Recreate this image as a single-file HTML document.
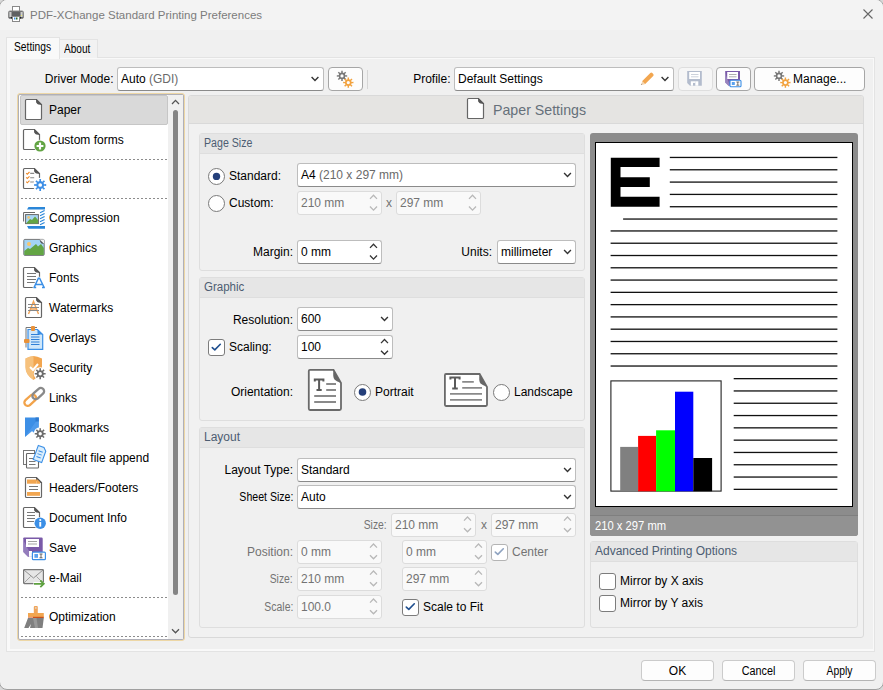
<!DOCTYPE html>
<html><head><meta charset="utf-8">
<style>
*{box-sizing:border-box}
html,body{margin:0;padding:0;width:883px;height:690px;overflow:hidden;background:#d8d8d8}
body{font-family:"Liberation Sans",sans-serif;font-size:12px;color:#000;position:relative}
.a{position:absolute}
.t{position:absolute;white-space:nowrap;line-height:14px}
.win{left:-1px;top:-1px;width:885px;height:691px;background:#f0f0f0;border:1px solid #a0a0a0;border-radius:8px;overflow:hidden}
.cb{position:absolute;background:#fff;border:1px solid #bdbdbd;border-bottom-color:#8a8a8a;border-radius:3px}
.btn{position:absolute;background:#fdfdfd;border:1px solid #cfcfcf;border-bottom-color:#b0b0b0;border-radius:4px}
.sp{position:absolute;background:#fff;border:1px solid #bdbdbd;border-bottom-color:#8a8a8a;border-radius:3px}
.sp.dis{background:#f9f9f9;border-color:#dcdcdc}
.grp{position:absolute;border:1px solid #dedede;border-radius:3px;background:#f0f0f0}
.gh{position:absolute;left:0;top:0;right:0;height:20px;background:#e6e6e6;border-bottom:1px solid #dedede}
.ght{position:absolute;left:4px;top:1.5px;color:#4d5d72;white-space:nowrap;line-height:14px;font-size:12px;transform-origin:0 0}
.chk{position:absolute;width:17px;height:17px;background:#fff;border:1.2px solid #7c7c7c;border-radius:3px}
.rad{position:absolute;width:17px;height:17px;background:#fff;border:1.2px solid #7a7a7a;border-radius:50%}
.dis{color:#737373}
.li{position:absolute;left:49px;white-space:nowrap;line-height:14px}
.dash{position:absolute;left:21px;width:146px;height:1px;background-image:linear-gradient(to right,#8c8c8c 50%,transparent 50%);background-size:4px 1px}
svg{position:absolute;overflow:visible}
</style></head><body>
<div class="a win">
  <!-- title bar -->
  <div class="a" style="left:0;top:0;width:883px;height:30px;background:#f3f3f3"></div>
  <div class="t" style="left:30px;top:8px;font-size:11.5px;color:#7c7c7c">PDF-XChange Standard Printing Preferences</div>

  <!-- tabs -->
  <div class="a" style="left:6px;top:57px;width:869px;height:595px;background:#f9f9f9;border:1px solid #e3e3e3"></div>
  <div class="a" style="left:10px;top:59px;width:863px;height:590px;background:#f0f0f0"></div>
  <div class="a" style="left:59px;top:39px;width:39px;height:19px;background:#f2f2f2;border:1px solid #e3e3e3;border-bottom:none"></div>
  <div class="a" style="left:6px;top:37px;width:54px;height:22px;background:#f9f9f9;border:1px solid #e3e3e3;border-bottom:none"></div>
  <div class="t" style="left:14px;top:40px;transform:scaleX(0.855);transform-origin:0 0">Settings</div>
  <div class="t" style="left:64px;top:41.5px;transform:scaleX(0.84);transform-origin:0 0">About</div>

  <!-- driver mode row -->
  <div class="t" style="right:769.5px;top:72px">Driver Mode:</div>
  <div class="cb" style="left:117px;top:67px;width:207px;height:24px"></div>
  <div class="t" style="left:121px;top:72px">Auto <span style="color:#6a6a6a">(GDI)</span></div>
  <div class="btn" style="left:328px;top:67px;width:35px;height:24px;border-color:#a6a6a6"></div>
  <div class="a" style="left:367px;top:70px;width:1px;height:19px;background:#d6d6d6"></div>

  <div class="t" style="right:432.5px;top:72px">Profile:</div>
  <div class="cb" style="left:454px;top:67px;width:220px;height:24px"></div>
  <div class="t" style="left:458px;top:72px">Default Settings</div>
  <div class="btn" style="left:678px;top:67px;width:35px;height:24px;background:#f6f6f6;border-color:#dedede"></div>
  <div class="btn" style="left:716px;top:67px;width:35px;height:24px;border-color:#a6a6a6"></div>
  <div class="btn" style="left:754px;top:67px;width:111px;height:24px;border-color:#a6a6a6"></div>
  <div class="t" style="left:793px;top:72px">Manage...</div>

  <!-- left list -->
  <div class="a" style="left:17px;top:93px;width:168px;height:548px;border:1px solid #edd7a6;border-radius:3px;background:#edd7a6"></div>
  <div class="a" style="left:18px;top:94px;width:166px;height:546px;border:1px solid #b0b0b8;border-radius:2px;background:#fff"></div>
  <div class="a" style="left:168px;top:95px;width:15px;height:544px;background:#f0f0f0"></div>
  <div class="a" style="left:173px;top:110px;width:5px;height:485px;background:#858585;border-radius:2.5px"></div>

  <div class="a" style="left:20px;top:95px;width:148px;height:30px;background:#d9d9d9;border:1px solid #c6c6c6;border-radius:2px"></div>
  <div class="li" style="top:103px">Paper</div>
  <div class="li" style="top:133px">Custom forms</div>
  <div class="dash" style="top:159px"></div>
  <div class="li" style="top:172px">General</div>
  <div class="dash" style="top:198px"></div>
  <div class="li" style="top:211px">Compression</div>
  <div class="li" style="top:241px">Graphics</div>
  <div class="li" style="top:271px">Fonts</div>
  <div class="li" style="top:301px">Watermarks</div>
  <div class="li" style="top:331px">Overlays</div>
  <div class="li" style="top:361px">Security</div>
  <div class="li" style="top:391px">Links</div>
  <div class="li" style="top:421px">Bookmarks</div>
  <div class="li" style="top:451px">Default file append</div>
  <div class="li" style="top:481px">Headers/Footers</div>
  <div class="li" style="top:511px">Document Info</div>
  <div class="li" style="top:541px">Save</div>
  <div class="li" style="top:571px">e-Mail</div>
  <div class="dash" style="top:597px"></div>
  <div class="li" style="top:610px">Optimization</div>
  <div class="dash" style="top:636px"></div>

  <!-- right panel -->
  <div class="a" style="left:188px;top:95px;width:676px;height:543px;background:#f1f1f1;border:1px solid #d9d9d9;border-radius:3px"></div>
  <div class="a" style="left:189px;top:96px;width:674px;height:28px;background:#e5e4e2;border-bottom:1px solid #d9d9d9;border-radius:2px 2px 0 0"></div>
  <div class="t" style="left:493px;top:101px;font-size:14.2px;line-height:18px;color:#66707a">Paper Settings</div>

  <!-- Page Size group -->
  <div class="grp" style="left:199px;top:133px;width:386px;height:138px"><div class="gh"></div><div class="ght" style="transform:scaleX(0.885)">Page Size</div></div>
  <div class="rad" style="left:208px;top:168px"></div>
  <div class="t" style="left:229px;top:169px">Standard:</div>
  <div class="cb" style="left:297px;top:163px;width:279px;height:24px"></div>
  <div class="t" style="left:301px;top:168px">A4 <span style="color:#6a6a6a">(210 x 297 mm)</span></div>
  <div class="rad" style="left:208px;top:195px"></div>
  <div class="t" style="left:229px;top:196px">Custom:</div>
  <div class="sp dis" style="left:297px;top:191px;width:85px;height:24px"></div>
  <div class="t dis" style="left:301px;top:196px">210 mm</div>
  <div class="t dis" style="left:386px;top:196px">x</div>
  <div class="sp dis" style="left:396px;top:191px;width:85px;height:24px"></div>
  <div class="t dis" style="left:400px;top:196px">297 mm</div>
  <div class="t" style="right:590px;top:245px">Margin:</div>
  <div class="sp" style="left:297px;top:240px;width:85px;height:24px"></div>
  <div class="t" style="left:301px;top:245px">0 mm</div>
  <div class="t" style="right:391px;top:245px">Units:</div>
  <div class="cb" style="left:497px;top:240px;width:79px;height:24px"></div>
  <div class="t" style="left:501px;top:245px">millimeter</div>

  <!-- Graphic group -->
  <div class="grp" style="left:199px;top:277px;width:386px;height:144px"><div class="gh"></div><div class="ght" style="transform:scaleX(0.96)">Graphic</div></div>
  <div class="t" style="right:590px;top:313px">Resolution:</div>
  <div class="cb" style="left:297px;top:307px;width:96px;height:24px"></div>
  <div class="t" style="left:301px;top:312px">600</div>
  <div class="chk" style="left:208px;top:339px"></div>
  <div class="t" style="left:229px;top:340px">Scaling:</div>
  <div class="sp" style="left:297px;top:335px;width:96px;height:24px"></div>
  <div class="t" style="left:301px;top:340px">100</div>
  <div class="t" style="right:590px;top:385px">Orientation:</div>
  <div class="rad" style="left:354px;top:384px"></div>
  <div class="t" style="left:375px;top:385px">Portrait</div>
  <div class="rad" style="left:493px;top:384px"></div>
  <div class="t" style="left:514px;top:385px">Landscape</div>

  <!-- Layout group -->
  <div class="grp" style="left:199px;top:427px;width:386px;height:201px"><div class="gh"></div><div class="ght">Layout</div></div>
  <div class="t" style="right:590px;top:463px">Layout Type:</div>
  <div class="cb" style="left:297px;top:458px;width:279px;height:24px"></div>
  <div class="t" style="left:301px;top:463px">Standard</div>
  <div class="t" style="right:590px;top:490px;transform:scaleX(0.88);transform-origin:100% 0">Sheet Size:</div>
  <div class="cb" style="left:297px;top:485px;width:279px;height:24px"></div>
  <div class="t" style="left:301px;top:490px">Auto</div>
  <div class="t dis" style="right:496px;top:518px;transform:scaleX(0.86);transform-origin:100% 0">Size:</div>
  <div class="sp dis" style="left:391px;top:513px;width:85px;height:24px"></div>
  <div class="t dis" style="left:395px;top:518px">210 mm</div>
  <div class="t dis" style="left:481px;top:518px">x</div>
  <div class="sp dis" style="left:491px;top:513px;width:85px;height:24px"></div>
  <div class="t dis" style="left:495px;top:518px">297 mm</div>
  <div class="t dis" style="right:590px;top:545px">Position:</div>
  <div class="sp dis" style="left:297px;top:540px;width:85px;height:24px"></div>
  <div class="t dis" style="left:301px;top:545px">0 mm</div>
  <div class="sp dis" style="left:402px;top:540px;width:85px;height:24px"></div>
  <div class="t dis" style="left:406px;top:545px">0 mm</div>
  <div class="chk" style="left:491px;top:543.5px;border-color:#b4b4b4"></div>
  <div class="t dis" style="left:512px;top:545px">Center</div>
  <div class="t dis" style="right:590px;top:572px;transform:scaleX(0.86);transform-origin:100% 0">Size:</div>
  <div class="sp dis" style="left:297px;top:567px;width:85px;height:24px"></div>
  <div class="t dis" style="left:301px;top:572px">210 mm</div>
  <div class="sp dis" style="left:402px;top:567px;width:85px;height:24px"></div>
  <div class="t dis" style="left:406px;top:572px">297 mm</div>
  <div class="t dis" style="right:590px;top:600px;transform:scaleX(0.87);transform-origin:100% 0">Scale:</div>
  <div class="sp dis" style="left:297px;top:595px;width:85px;height:24px"></div>
  <div class="t dis" style="left:301px;top:600px">100.0</div>
  <div class="chk" style="left:402px;top:599px"></div>
  <div class="t" style="left:423px;top:600px">Scale to Fit</div>

  <!-- preview -->
  <div class="a" style="left:590px;top:133px;width:268px;height:403px;background:#8c8c8c;border-radius:3px"></div>
  <div class="a" style="left:595px;top:142px;width:258px;height:365px;background:#fff;border:1px solid #000"></div>
  <div class="a" style="left:590px;top:515px;width:268px;height:21px;background:#929292;border-top:1px solid #7f7f7f;border-radius:0 0 3px 3px"></div>
  <div class="t" style="left:595px;top:519px;color:#fff;transform:scaleX(0.935);transform-origin:0 0">210 x 297 mm</div>

  <!-- advanced -->
  <div class="grp" style="left:590px;top:541px;width:268px;height:87px"><div class="gh"></div><div class="ght">Advanced Printing Options</div></div>
  <div class="chk" style="left:599px;top:573px"></div>
  <div class="t" style="left:620px;top:574px">Mirror by X axis</div>
  <div class="chk" style="left:599px;top:595px"></div>
  <div class="t" style="left:620px;top:596px">Mirror by Y axis</div>

  <!-- bottom buttons -->
  <div class="btn" style="left:641px;top:660px;width:73px;height:21px;border-color:#cbcbcb;border-bottom-color:#b4b4b4"><div class="t" style="left:0;right:0;top:3px;text-align:center">OK</div></div>
  <div class="btn" style="left:722px;top:660px;width:73px;height:21px;border-color:#cbcbcb;border-bottom-color:#b4b4b4"><div class="t" style="left:0;right:0;top:3px;text-align:center;transform:scaleX(0.9)">Cancel</div></div>
  <div class="btn" style="left:803px;top:660px;width:73px;height:21px;border-color:#cbcbcb;border-bottom-color:#b4b4b4"><div class="t" style="left:0;right:0;top:3px;text-align:center;transform:scaleX(0.86)">Apply</div></div>
  <svg style="left:0;top:0" width="883" height="690" viewBox="0 0 883 690">
<path d="M26.5 99.5 H36.5 L41.5 104.5 V118.5 Q41.5 119.5 40.5 119.5 H26.5 Q25.5 119.5 25.5 118.5 V100.5 Q25.5 99.5 26.5 99.5Z" fill="#fff" stroke="#666" stroke-width="1.2"/><path d="M36.5 99.5 L41.5 104.5 L37.7 103.9 Q35.9 103.0 36.5 99.5Z" fill="#555" stroke="#555" stroke-width="0.8" stroke-linejoin="round"/>
<path d="M24.5 129.5 H34.5 L39.5 134.5 V148.5 Q39.5 149.5 38.5 149.5 H24.5 Q23.5 149.5 23.5 148.5 V130.5 Q23.5 129.5 24.5 129.5Z" fill="#fff" stroke="#666" stroke-width="1.2"/><path d="M34.5 129.5 L39.5 134.5 L35.7 133.9 Q33.9 133.0 34.5 129.5Z" fill="#555" stroke="#555" stroke-width="0.8" stroke-linejoin="round"/>
<circle cx="40" cy="146" r="6.3" fill="#fff"/><circle cx="40" cy="146" r="5.6" fill="#62a443"/>
<path d="M36.6 146 L43.4 146" stroke="#fff" stroke-width="2.2"/><path d="M40 142.6 L40 149.4" stroke="#fff" stroke-width="2.2"/>
<path d="M24.5 168.5 H34.5 L39.5 173.5 V187.5 Q39.5 188.5 38.5 188.5 H24.5 Q23.5 188.5 23.5 187.5 V169.5 Q23.5 168.5 24.5 168.5Z" fill="#fff" stroke="#666" stroke-width="1.2"/><path d="M34.5 168.5 L39.5 173.5 L35.7 172.9 Q33.9 172.0 34.5 168.5Z" fill="#555" stroke="#555" stroke-width="0.8" stroke-linejoin="round"/>
<path d="M26.2 173.10000000000002 l1.1 1.1 l2.2 -2.2" fill="none" stroke="#ee8a2a" stroke-width="1.1"/>
<path d="M30.2 173.4 L34.2 173.4" stroke="#8a8a8a" stroke-width="1.1"/>
<path d="M26.2 177.4 l1.1 1.1 l2.2 -2.2" fill="none" stroke="#ee8a2a" stroke-width="1.1"/>
<path d="M30.2 177.7 L34.2 177.7" stroke="#8a8a8a" stroke-width="1.1"/>
<path d="M26.2 181.70000000000002 l1.1 1.1 l2.2 -2.2" fill="none" stroke="#ee8a2a" stroke-width="1.1"/>
<path d="M30.2 182.0 L34.2 182.0" stroke="#8a8a8a" stroke-width="1.1"/>
<circle cx="40.2" cy="185" r="7.15" fill="#fff"/><path transform="translate(40.2 185) scale(1.1)" d="M-0.70 -3.53 L-0.81 -5.44 L0.81 -5.44 L0.70 -3.53 L2.00 -2.99 L3.28 -4.42 L4.42 -3.28 L2.99 -2.00 L3.53 -0.70 L5.44 -0.81 L5.44 0.81 L3.53 0.70 L2.99 2.00 L4.42 3.28 L3.28 4.42 L2.00 2.99 L0.70 3.53 L0.81 5.44 L-0.81 5.44 L-0.70 3.53 L-2.00 2.99 L-3.28 4.42 L-4.42 3.28 L-2.99 2.00 L-3.53 0.70 L-5.44 0.81 L-5.44 -0.81 L-3.53 -0.70 L-2.99 -2.00 L-4.42 -3.28 L-3.28 -4.42 L-2.00 -2.99Z M1.70 0 A1.7 1.7 0 1 0 -1.70 0 A1.7 1.7 0 1 0 1.70 0Z" fill="#3d8fe6" fill-rule="evenodd"/>
<path d="M28.5 207 H45 V209.6 H27 Z" fill="#2a86d8"/>
<path d="M27 226 H45 V228.8 H28.5 Z" fill="#2a86d8"/>
<path d="M23.6 221.5 V212.5 H35" fill="none" stroke="#666" stroke-width="1"/>
<rect x="25.6" y="214.6" width="12.8" height="9" fill="#a9d6f5" stroke="#666" stroke-width="1"/>
<path d="M26 223.5 L30 219 L32 220 L35 216.5 L38 220 V223.5Z" fill="#64a544"/><circle cx="28.6" cy="217.4" r="1.3" fill="#f5c26b"/>
<path d="M40 212.7 L44.6 210.5" stroke="#2a86d8" stroke-width="1.2"/>
<path d="M40 215.7 L44.6 213.5" stroke="#2a86d8" stroke-width="1.2"/>
<path d="M40 218.7 L44.6 216.5" stroke="#2a86d8" stroke-width="1.2"/>
<path d="M40 221.7 L44.6 219.5" stroke="#2a86d8" stroke-width="1.2"/>
<path d="M40 224.7 L44.6 222.5" stroke="#2a86d8" stroke-width="1.2"/>
<rect x="23.8" y="239.4" width="20.4" height="16" rx="1" fill="#a3d4f5" stroke="#777" stroke-width="1"/>
<path d="M24.3 255 V251 L28 248 L30 249 L36 244 L38 246.5 L41 244 L43.8 248 V255Z" fill="#63a544"/>
<circle cx="29" cy="244" r="2" fill="#f7c56a"/>
<path d="M39.5 239.4 L44.2 244.1 V239.4Z" fill="#f0f0f0"/><path d="M39.5 239.4 L44.2 244.1 L41.5 243.5 Q40 242 39.5 239.4Z" fill="#555"/>
<path d="M24.5 267.5 H34.5 L39.5 272.5 V286.5 Q39.5 287.5 38.5 287.5 H24.5 Q23.5 287.5 23.5 286.5 V268.5 Q23.5 267.5 24.5 267.5Z" fill="#fff" stroke="#666" stroke-width="1.2"/><path d="M34.5 267.5 L39.5 272.5 L35.7 271.9 Q33.9 271.0 34.5 267.5Z" fill="#555" stroke="#555" stroke-width="0.8" stroke-linejoin="round"/>
<path d="M27 273.5 L36 273.5" stroke="#777" stroke-width="1"/>
<path d="M27 276.5 L36 276.5" stroke="#777" stroke-width="1"/>
<path d="M27 279.5 L36 279.5" stroke="#777" stroke-width="1"/>
<path d="M27 282.5 L36 282.5" stroke="#777" stroke-width="1"/>
<path d="M33.6 288 L38.2 278 H39.8 L44.6 288" fill="#fff" stroke="#fff" stroke-width="2.5"/>
<path d="M33.8 288 L38.4 278.2 H39.6 L44.4 288 M35.8 284.6 H42.2 M33.5 287.5 H36.2 M42 287.5 H44.8" fill="none" stroke="#3b8fe6" stroke-width="1.5"/>
<path d="M26.5 297.5 H36.5 L41.5 302.5 V316.5 Q41.5 317.5 40.5 317.5 H26.5 Q25.5 317.5 25.5 316.5 V298.5 Q25.5 297.5 26.5 297.5Z" fill="#fff" stroke="#666" stroke-width="1.2"/><path d="M36.5 297.5 L41.5 302.5 L37.7 301.9 Q35.9 301.0 36.5 297.5Z" fill="#555" stroke="#555" stroke-width="0.8" stroke-linejoin="round"/>
<path d="M28.5 314 L33.5 301.5 L38.5 314 M30.5 309 H36.5" fill="none" stroke="#f2a355" stroke-width="1.4"/>
<path d="M28 304.5 L39 304.5" stroke="#888" stroke-width="1"/>
<path d="M28 307.5 L39 307.5" stroke="#888" stroke-width="1"/>
<path d="M28 310.5 L39 310.5" stroke="#888" stroke-width="1"/>
<path d="M26 347.5 V327.5 H37" fill="none" stroke="#777" stroke-width="1"/>
<path d="M28 329.5 H37.5 L42.7 334.5 V349.3 H28Z" fill="#cfe7fa" stroke="#3b8fe6" stroke-width="1.2"/>
<path d="M37.5 329.5 L42.7 334.5 H38.5 Q37.5 334.5 37.5 333.5Z" fill="#3b8fe6"/>
<path d="M31 334.5 L39.5 334.5" stroke="#2f7fd6" stroke-width="1"/>
<path d="M31 337 L39.5 337" stroke="#2f7fd6" stroke-width="1"/>
<path d="M31 339.5 L39.5 339.5" stroke="#2f7fd6" stroke-width="1"/>
<path d="M31 342 L39.5 342" stroke="#2f7fd6" stroke-width="1"/>
<path d="M31 344.5 L39.5 344.5" stroke="#2f7fd6" stroke-width="1"/>
<rect x="31" y="326" width="4" height="5" rx="1" fill="#e8923a"/><rect x="24" y="339" width="5.5" height="4" rx="1" fill="#e8923a"/>
<path d="M25.5 358.5 Q30 356 33.5 356 Q37 356 42 358.5 V367 Q42 375 33.5 380 Q25.5 375 25.5 367Z" fill="#f2a650"/>
<path d="M33.5 356 Q30 356 25.5 358.5 V367 Q25.5 375 33.5 380Z" fill="#f6c887" opacity="0.8"/>
<path d="M30 367 L33 370 L38 364" fill="none" stroke="#fff" stroke-width="2"/>
<circle cx="40.2" cy="373.7" r="6.5" fill="#fff"/><path transform="translate(40.2 373.7) scale(1.0)" d="M-0.70 -3.53 L-0.81 -5.44 L0.81 -5.44 L0.70 -3.53 L2.00 -2.99 L3.28 -4.42 L4.42 -3.28 L2.99 -2.00 L3.53 -0.70 L5.44 -0.81 L5.44 0.81 L3.53 0.70 L2.99 2.00 L4.42 3.28 L3.28 4.42 L2.00 2.99 L0.70 3.53 L0.81 5.44 L-0.81 5.44 L-0.70 3.53 L-2.00 2.99 L-3.28 4.42 L-4.42 3.28 L-2.99 2.00 L-3.53 0.70 L-5.44 0.81 L-5.44 -0.81 L-3.53 -0.70 L-2.99 -2.00 L-4.42 -3.28 L-3.28 -4.42 L-2.00 -2.99Z M1.70 0 A1.7 1.7 0 1 0 -1.70 0 A1.7 1.7 0 1 0 1.70 0Z" fill="#6b6b6b" fill-rule="evenodd"/>
<rect x="23.5" y="397" width="13.5" height="6.6" rx="3.3" transform="rotate(-42 30.2 400.3)" fill="none" stroke="#f2a34a" stroke-width="2.3"/>
<rect x="31.5" y="390.3" width="13.5" height="6.6" rx="3.3" transform="rotate(-42 38.2 393.6)" fill="none" stroke="#8a8a8a" stroke-width="2.3"/>
<path d="M25 417.5 H38.8 V436.5 L32 431 L25 437Z" fill="#3d8fe6"/><path d="M25 437 L38.8 417.5 V436.5 L32 431Z" fill="#5aa2ee" opacity="0.6"/><rect x="35.5" y="417.5" width="3.3" height="4" fill="#2f7bd0"/>
<circle cx="40.2" cy="433.7" r="6.5" fill="#fff"/><path transform="translate(40.2 433.7) scale(1.0)" d="M-0.70 -3.53 L-0.81 -5.44 L0.81 -5.44 L0.70 -3.53 L2.00 -2.99 L3.28 -4.42 L4.42 -3.28 L2.99 -2.00 L3.53 -0.70 L5.44 -0.81 L5.44 0.81 L3.53 0.70 L2.99 2.00 L4.42 3.28 L3.28 4.42 L2.00 2.99 L0.70 3.53 L0.81 5.44 L-0.81 5.44 L-0.70 3.53 L-2.00 2.99 L-3.28 4.42 L-4.42 3.28 L-2.99 2.00 L-3.53 0.70 L-5.44 0.81 L-5.44 -0.81 L-3.53 -0.70 L-2.99 -2.00 L-4.42 -3.28 L-3.28 -4.42 L-2.00 -2.99Z M1.70 0 A1.7 1.7 0 1 0 -1.70 0 A1.7 1.7 0 1 0 1.70 0Z" fill="#6b6b6b" fill-rule="evenodd"/>
<rect x="23.5" y="450.5" width="11" height="14" fill="#fff" stroke="#777" stroke-width="1"/>
<rect x="26.5" y="453.5" width="12" height="14.5" rx="0.8" fill="#fff" stroke="#666" stroke-width="1.1"/>
<path d="M29 458.5 L35.5 458.5" stroke="#777" stroke-width="1"/>
<path d="M29 461.5 L35.5 461.5" stroke="#777" stroke-width="1"/>
<path d="M29 464.5 L35.5 464.5" stroke="#777" stroke-width="1"/>
<path transform="rotate(20 40 454)" d="M35.5 446.5 H41.5 L44.5 449.5 V461.5 H35.5Z" fill="#dbeefc" stroke="#3b8fe6" stroke-width="1.1"/>
<path transform="rotate(20 40 454)" d="M37.5 451.5 H42 M37.5 454.5 H42 M37.5 457.5 H42" stroke="#3b8fe6" stroke-width="1"/>
<path d="M26.5 477.5 H36.5 L41.5 482.5 V496.5 Q41.5 497.5 40.5 497.5 H26.5 Q25.5 497.5 25.5 496.5 V478.5 Q25.5 477.5 26.5 477.5Z" fill="#fff" stroke="#666" stroke-width="1.2"/><path d="M36.5 477.5 L41.5 482.5 L37.7 481.9 Q35.9 481.0 36.5 477.5Z" fill="#555" stroke="#555" stroke-width="0.8" stroke-linejoin="round"/>
<rect x="27" y="479.5" width="9.5" height="4.2" fill="#f2a650"/><path d="M36.5 479.5 H37.5 L40 482 V483.7 H36.5Z" fill="#f2a650"/>
<rect x="27" y="492" width="13" height="3.8" fill="#f2a650"/>
<path d="M29 486.5 L38 486.5" stroke="#777" stroke-width="1"/><path d="M29 489.5 L38 489.5" stroke="#777" stroke-width="1"/>
<path d="M24.5 507.5 H34.5 L39.5 512.5 V526.5 Q39.5 527.5 38.5 527.5 H24.5 Q23.5 527.5 23.5 526.5 V508.5 Q23.5 507.5 24.5 507.5Z" fill="#fff" stroke="#666" stroke-width="1.2"/><path d="M34.5 507.5 L39.5 512.5 L35.7 511.9 Q33.9 511.0 34.5 507.5Z" fill="#555" stroke="#555" stroke-width="0.8" stroke-linejoin="round"/>
<path d="M27 512.5 L35 512.5" stroke="#777" stroke-width="1"/>
<path d="M27 515.5 L35 515.5" stroke="#777" stroke-width="1"/>
<path d="M27 518.5 L35 518.5" stroke="#777" stroke-width="1"/>
<path d="M27 521.5 L35 521.5" stroke="#777" stroke-width="1"/>
<circle cx="40.2" cy="523.3" r="6.4" fill="#fff"/><circle cx="40.2" cy="523.3" r="5.7" fill="#3b8fe6"/>
<rect x="39.3" y="522" width="1.9" height="4.6" fill="#fff"/><circle cx="40.25" cy="520" r="1.1" fill="#fff"/>
<path d="M24 537.5 H41.5 Q42.7 537.5 42.7 538.7 V556.8 H28 L23.3 552 V538.3 Q23.3 537.5 24 537.5Z" fill="#7a5aa8"/>
<path d="M23.3 538.5 V552 L28 556.8 H32 L23.3 540Z" fill="#9f8cc4" opacity="0.7"/>
<rect x="26" y="539" width="13" height="8" fill="#fff"/><path d="M28 541.5 H37 M28 544 H37" stroke="#999" stroke-width="0.9"/>
<rect x="29" y="551" width="3" height="5.8" fill="#fff"/>
<rect x="32.4" y="552.1" width="13" height="7.6" rx="1" fill="#fff" stroke="#3b8fe6" stroke-width="1.2"/><rect x="34.4" y="554" width="3.6" height="3.8" fill="#5ba2ee"/><path d="M39.5 554 H42.5 M41 554 V557.8 M39.5 557.8 H42.5" stroke="#555" stroke-width="0.9"/>
<rect x="23.6" y="569.6" width="19.8" height="14" rx="0.8" fill="#e6e6e6" stroke="#777" stroke-width="1.2"/>
<path d="M24 570 L33.5 578 L43 570" fill="none" stroke="#888" stroke-width="0.9"/><path d="M24 583 L30.5 576.5 M43 583 L36.5 576.5" stroke="#888" stroke-width="0.7"/>
<path d="M33.5 584 H44.5" stroke="#fff" stroke-width="4"/>
<path d="M34 583.8 H43.5 M40.3 580.5 L43.8 583.8 L40.3 587.2" fill="none" stroke="#5ea140" stroke-width="1.8"/>
<rect x="33.8" y="606" width="4" height="7.5" rx="1" fill="#f0a55a"/><rect x="35.2" y="607.3" width="1.3" height="1.3" fill="#dfeefa"/>
<rect x="28" y="613" width="15.8" height="4" fill="#f2a650"/><rect x="33" y="616.8" width="10.8" height="1.3" fill="#c8501a"/><rect x="28" y="616.8" width="5" height="1.3" fill="#e8a080"/>
<path d="M28 618.1 H43.8 L42.5 628 H30 L31 624 L28.5 628 H24.2Z" fill="#7f7f7f"/><path d="M33 618.1 L35 628 H38 L36.5 618.1Z" fill="#a8a8a8" opacity="0.6"/>
<path d="M311.6 77.05 L315 80.55 L318.4 77.05" fill="none" stroke="#333" stroke-width="1.4"/>
<path d="M661.6 77.05 L665 80.55 L668.4 77.05" fill="none" stroke="#333" stroke-width="1.4"/>
<path d="M564.1 173.05 L567.5 176.55 L570.9 173.05" fill="none" stroke="#333" stroke-width="1.4"/>
<path d="M381.1 317.05 L384.5 320.55 L387.9 317.05" fill="none" stroke="#333" stroke-width="1.4"/>
<path d="M564.1 468.05 L567.5 471.55 L570.9 468.05" fill="none" stroke="#333" stroke-width="1.4"/>
<path d="M564.1 495.05 L567.5 498.55 L570.9 495.05" fill="none" stroke="#333" stroke-width="1.4"/>
<path d="M564.1 250.05 L567.5 253.55 L570.9 250.05" fill="none" stroke="#333" stroke-width="1.4"/>
<path d="M370.0 247.90000000000003 L373.5 244.3 L377.0 247.90000000000003" fill="none" stroke="#333" stroke-width="1.3"/><path d="M370.0 255.5 L373.5 259.1 L377.0 255.5" fill="none" stroke="#333" stroke-width="1.3"/>
<path d="M381.0 343.1 L384.5 339.5 L388.0 343.1" fill="none" stroke="#333" stroke-width="1.3"/><path d="M381.0 350.7 L384.5 354.3 L388.0 350.7" fill="none" stroke="#333" stroke-width="1.3"/>
<path d="M370.0 198.90000000000003 L373.5 195.3 L377.0 198.90000000000003" fill="none" stroke="#b8b8b8" stroke-width="1.3"/><path d="M370.0 206.5 L373.5 210.10000000000002 L377.0 206.5" fill="none" stroke="#b8b8b8" stroke-width="1.3"/>
<path d="M469.0 198.90000000000003 L472.5 195.3 L476.0 198.90000000000003" fill="none" stroke="#b8b8b8" stroke-width="1.3"/><path d="M469.0 206.5 L472.5 210.10000000000002 L476.0 206.5" fill="none" stroke="#b8b8b8" stroke-width="1.3"/>
<path d="M464.0 520.5999999999999 L467.5 517.0 L471.0 520.5999999999999" fill="none" stroke="#b8b8b8" stroke-width="1.3"/><path d="M464.0 528.2 L467.5 531.8 L471.0 528.2" fill="none" stroke="#b8b8b8" stroke-width="1.3"/>
<path d="M564.0 520.5999999999999 L567.5 517.0 L571.0 520.5999999999999" fill="none" stroke="#b8b8b8" stroke-width="1.3"/><path d="M564.0 528.2 L567.5 531.8 L571.0 528.2" fill="none" stroke="#b8b8b8" stroke-width="1.3"/>
<path d="M370.0 547.5999999999999 L373.5 544.0 L377.0 547.5999999999999" fill="none" stroke="#b8b8b8" stroke-width="1.3"/><path d="M370.0 555.2 L373.5 558.8 L377.0 555.2" fill="none" stroke="#b8b8b8" stroke-width="1.3"/>
<path d="M475.0 547.5999999999999 L478.5 544.0 L482.0 547.5999999999999" fill="none" stroke="#b8b8b8" stroke-width="1.3"/><path d="M475.0 555.2 L478.5 558.8 L482.0 555.2" fill="none" stroke="#b8b8b8" stroke-width="1.3"/>
<path d="M370.0 574.5999999999999 L373.5 571.0 L377.0 574.5999999999999" fill="none" stroke="#b8b8b8" stroke-width="1.3"/><path d="M370.0 582.2 L373.5 585.8 L377.0 582.2" fill="none" stroke="#b8b8b8" stroke-width="1.3"/>
<path d="M475.0 574.5999999999999 L478.5 571.0 L482.0 574.5999999999999" fill="none" stroke="#b8b8b8" stroke-width="1.3"/><path d="M475.0 582.2 L478.5 585.8 L482.0 582.2" fill="none" stroke="#b8b8b8" stroke-width="1.3"/>
<path d="M370.0 602.5999999999999 L373.5 599.0 L377.0 602.5999999999999" fill="none" stroke="#b8b8b8" stroke-width="1.3"/><path d="M370.0 610.2 L373.5 613.8 L377.0 610.2" fill="none" stroke="#b8b8b8" stroke-width="1.3"/>
<path d="M172.0 104.0 L175.5 100.4 L179.0 104.0" fill="none" stroke="#555" stroke-width="1.3"/>
<path d="M172.0 629.2 L175.5 632.8 L179.0 629.2" fill="none" stroke="#555" stroke-width="1.3"/>
<path d="M212.3 347.6 L214.8 349.9 L220.3 344.3" fill="none" stroke="#1f4f8f" stroke-width="1.6" stroke-linecap="round" stroke-linejoin="round"/>
<path d="M495.3 552.1 L497.8 554.4 L503.3 548.8" fill="none" stroke="#8fa3c0" stroke-width="1.6" stroke-linecap="round" stroke-linejoin="round"/>
<path d="M406.3 607.1 L408.8 609.4 L414.3 603.8" fill="none" stroke="#1f4f8f" stroke-width="1.6" stroke-linecap="round" stroke-linejoin="round"/>
<rect x="12.5" y="6.5" width="7" height="5" fill="#fff" stroke="#888" stroke-width="1"/>
<rect x="8.5" y="11" width="15" height="7.5" rx="1.5" fill="#5f6163" stroke="#8a8a8a" stroke-width="1"/>
<rect x="9.3" y="12" width="2.2" height="5" fill="#cfcfcf"/><rect x="20.5" y="12" width="2.2" height="5" fill="#cfcfcf"/><rect x="21" y="15" width="1" height="1" fill="#ee6"/>
<rect x="12.5" y="16.5" width="7" height="5" fill="#fff" stroke="#888" stroke-width="1"/>
<rect x="14" y="17.5" width="1.5" height="2" fill="#3a8ee6"/><rect x="16" y="17.5" width="1.5" height="2" fill="#2a6a2a"/><rect x="11" y="17" width="1" height="1.5" fill="#222"/><rect x="20" y="17" width="1" height="1.5" fill="#222"/>
<path d="M863.5 9.5 L872.5 18.5 M872.5 9.5 L863.5 18.5" stroke="#666" stroke-width="1.1"/>
<path transform="translate(342 75.9) scale(0.95)" d="M-0.70 -3.53 L-0.81 -5.44 L0.81 -5.44 L0.70 -3.53 L2.00 -2.99 L3.28 -4.42 L4.42 -3.28 L2.99 -2.00 L3.53 -0.70 L5.44 -0.81 L5.44 0.81 L3.53 0.70 L2.99 2.00 L4.42 3.28 L3.28 4.42 L2.00 2.99 L0.70 3.53 L0.81 5.44 L-0.81 5.44 L-0.70 3.53 L-2.00 2.99 L-3.28 4.42 L-4.42 3.28 L-2.99 2.00 L-3.53 0.70 L-5.44 0.81 L-5.44 -0.81 L-3.53 -0.70 L-2.99 -2.00 L-4.42 -3.28 L-3.28 -4.42 L-2.00 -2.99Z M1.70 0 A1.7 1.7 0 1 0 -1.70 0 A1.7 1.7 0 1 0 1.70 0Z" fill="#777" fill-rule="evenodd"/><path transform="translate(348.3 82.6) scale(0.95)" d="M-0.70 -3.53 L-0.81 -5.44 L0.81 -5.44 L0.70 -3.53 L2.00 -2.99 L3.28 -4.42 L4.42 -3.28 L2.99 -2.00 L3.53 -0.70 L5.44 -0.81 L5.44 0.81 L3.53 0.70 L2.99 2.00 L4.42 3.28 L3.28 4.42 L2.00 2.99 L0.70 3.53 L0.81 5.44 L-0.81 5.44 L-0.70 3.53 L-2.00 2.99 L-3.28 4.42 L-4.42 3.28 L-2.99 2.00 L-3.53 0.70 L-5.44 0.81 L-5.44 -0.81 L-3.53 -0.70 L-2.99 -2.00 L-4.42 -3.28 L-3.28 -4.42 L-2.00 -2.99Z M1.70 0 A1.7 1.7 0 1 0 -1.70 0 A1.7 1.7 0 1 0 1.70 0Z" fill="#f2a340" fill-rule="evenodd"/>
<path transform="translate(779 75.9) scale(0.95)" d="M-0.70 -3.53 L-0.81 -5.44 L0.81 -5.44 L0.70 -3.53 L2.00 -2.99 L3.28 -4.42 L4.42 -3.28 L2.99 -2.00 L3.53 -0.70 L5.44 -0.81 L5.44 0.81 L3.53 0.70 L2.99 2.00 L4.42 3.28 L3.28 4.42 L2.00 2.99 L0.70 3.53 L0.81 5.44 L-0.81 5.44 L-0.70 3.53 L-2.00 2.99 L-3.28 4.42 L-4.42 3.28 L-2.99 2.00 L-3.53 0.70 L-5.44 0.81 L-5.44 -0.81 L-3.53 -0.70 L-2.99 -2.00 L-4.42 -3.28 L-3.28 -4.42 L-2.00 -2.99Z M1.70 0 A1.7 1.7 0 1 0 -1.70 0 A1.7 1.7 0 1 0 1.70 0Z" fill="#777" fill-rule="evenodd"/><path transform="translate(785.4 82.6) scale(0.95)" d="M-0.70 -3.53 L-0.81 -5.44 L0.81 -5.44 L0.70 -3.53 L2.00 -2.99 L3.28 -4.42 L4.42 -3.28 L2.99 -2.00 L3.53 -0.70 L5.44 -0.81 L5.44 0.81 L3.53 0.70 L2.99 2.00 L4.42 3.28 L3.28 4.42 L2.00 2.99 L0.70 3.53 L0.81 5.44 L-0.81 5.44 L-0.70 3.53 L-2.00 2.99 L-3.28 4.42 L-4.42 3.28 L-2.99 2.00 L-3.53 0.70 L-5.44 0.81 L-5.44 -0.81 L-3.53 -0.70 L-2.99 -2.00 L-4.42 -3.28 L-3.28 -4.42 L-2.00 -2.99Z M1.70 0 A1.7 1.7 0 1 0 -1.70 0 A1.7 1.7 0 1 0 1.70 0Z" fill="#f2a340" fill-rule="evenodd"/>
<path d="M641.5 84.5 L642.3 81 L650.3 73 Q651.3 72 652.3 73 L653.2 73.9 Q654.2 74.9 653.2 75.9 L645.2 83.9Z" fill="#f2a650"/><path d="M641.5 84.5 L642.3 81 L645.2 83.9Z" fill="#f6d9b5"/><path d="M641.3 84.7 L642 83.9" stroke="#666" stroke-width="0.8"/>
<path d="M687.5 71 H701.8 V85.7 H690 L687.2 83 V71Z" fill="#b3bccd"/><rect x="689.2" y="72" width="10.8" height="7" fill="#fff"/><path d="M691 74.5 H698.5 M691 76.8 H698.5" stroke="#c0c6d2" stroke-width="0.8"/><rect x="690.8" y="81.3" width="2.2" height="4.4" fill="#fff"/><rect x="695.3" y="81.3" width="3" height="4.4" fill="#fff"/><rect x="693" y="81.3" width="2.3" height="1.6" fill="#fff"/>
<path d="M725.5 71 H740 V85.7 H728.5 L725.2 82.5 V71Z" fill="#7a5aa8"/><path d="M725.2 71 V82.5 L728.5 85.7 H730 L725.2 73Z" fill="#a596c8" opacity="0.7"/><rect x="727.2" y="72" width="10.8" height="7" fill="#fff"/><path d="M729 74.5 H736.5 M729 76.8 H736.5" stroke="#999" stroke-width="0.8"/>
<rect x="730" y="80.3" width="11" height="6.4" rx="1" fill="#fff" stroke="#3b8fe6" stroke-width="1.1"/><rect x="731.8" y="82" width="3" height="3" fill="#5ba2ee"/><path d="M736.3 82 H739.3 M737.8 82 V85.2 M736.3 85.2 H739.3" stroke="#555" stroke-width="0.8"/>
<path d="M468.5 98.5 H478.5 L483.5 103.5 V117.5 Q483.5 118.5 482.5 118.5 H468.5 Q467.5 118.5 467.5 117.5 V99.5 Q467.5 98.5 468.5 98.5Z" fill="#fff" stroke="#666" stroke-width="1.2"/><path d="M478.5 98.5 L483.5 103.5 L479.7 102.9 Q477.9 102.0 478.5 98.5Z" fill="#555" stroke="#555" stroke-width="0.8" stroke-linejoin="round"/>
<path d="M310 369.8 H333.5 L341 383 V408.5 Q341 410 339.5 410 H310 Q308.8 410 308.8 408.5 V371 Q308.8 369.8 310 369.8Z" fill="#fff" stroke="#6a6a6a" stroke-width="1.8"/>
<path d="M333.5 369.8 L341 383 Q336 381 334.5 379.5 Q332.5 377 333.5 369.8Z" fill="#666"/>
<path d="M314.8 381.6 V379.6 H323.4 V381.6 M319.1 379.6 V390 M316.5 390 H321.7" fill="none" stroke="#5a5a5a" stroke-width="2"/>
<path d="M326.2 384 H336 M326.2 390 H336 M314.2 396 H336 M314.2 402 H336" stroke="#8a8a8a" stroke-width="1.8"/>
<path d="M446 374 H479.6 L487 386.9 V404.8 Q487 406 485.8 406 H446 Q444.9 406 444.9 404.8 V375.2 Q444.9 374 446 374Z" fill="#fff" stroke="#6a6a6a" stroke-width="1.8"/>
<path d="M479.6 374 L487 386.9 Q482 385 480.5 383.5 Q478.5 381 479.6 374Z" fill="#666"/>
<path d="M450.4 379.6 V377.6 H459.6 V379.6 M455 377.6 V388.4 M452.2 388.4 H457.8" fill="none" stroke="#5a5a5a" stroke-width="2"/>
<path d="M462.2 381.9 H473.8 M462.2 387.8 H482 M450 393.9 H482 M450 399.8 H482" stroke="#8a8a8a" stroke-width="1.8"/>
<circle cx="216.5" cy="176.4" r="3.7" fill="#243f7a"/>
<circle cx="362.5" cy="392" r="3.8" fill="#243f7a"/>
<path d="M610.8 157.7 H659.6 V167.1 H620.5 V177.3 H649.8 V187.1 H620.5 V196.8 H659.6 V206.7 H610.8Z" fill="#000"/>
<rect x="669.8" y="156.80" width="167.6" height="1.3" fill="#111"/>
<rect x="669.8" y="169.12" width="167.6" height="1.3" fill="#111"/>
<rect x="669.8" y="181.44" width="167.6" height="1.3" fill="#111"/>
<rect x="669.8" y="193.76" width="167.6" height="1.3" fill="#111"/>
<rect x="669.8" y="206.08" width="167.6" height="1.3" fill="#111"/>
<rect x="623.1" y="218.4" width="214.3" height="1.3" fill="#111"/>
<rect x="610.6" y="230.30" width="226.8" height="1.3" fill="#111"/>
<rect x="610.6" y="242.58" width="226.8" height="1.3" fill="#111"/>
<rect x="610.6" y="254.86" width="226.8" height="1.3" fill="#111"/>
<rect x="610.6" y="267.14" width="226.8" height="1.3" fill="#111"/>
<rect x="610.6" y="279.42" width="226.8" height="1.3" fill="#111"/>
<rect x="610.6" y="291.70" width="226.8" height="1.3" fill="#111"/>
<rect x="610.6" y="303.98" width="226.8" height="1.3" fill="#111"/>
<rect x="610.6" y="316.26" width="226.8" height="1.3" fill="#111"/>
<rect x="610.6" y="328.54" width="226.8" height="1.3" fill="#111"/>
<rect x="610.6" y="340.82" width="226.8" height="1.3" fill="#111"/>
<rect x="610.6" y="353.10" width="226.8" height="1.3" fill="#111"/>
<rect x="610.6" y="365.38" width="226.8" height="1.3" fill="#111"/>
<rect x="733.7" y="378.00" width="103.7" height="1.3" fill="#111"/>
<rect x="733.7" y="390.30" width="103.7" height="1.3" fill="#111"/>
<rect x="733.7" y="402.60" width="103.7" height="1.3" fill="#111"/>
<rect x="733.7" y="414.90" width="103.7" height="1.3" fill="#111"/>
<rect x="733.7" y="427.20" width="103.7" height="1.3" fill="#111"/>
<rect x="733.7" y="439.50" width="103.7" height="1.3" fill="#111"/>
<rect x="733.7" y="451.80" width="103.7" height="1.3" fill="#111"/>
<rect x="733.7" y="464.10" width="103.7" height="1.3" fill="#111"/>
<rect x="733.7" y="476.40" width="103.7" height="1.3" fill="#111"/>
<rect x="733.7" y="488.70" width="103.7" height="1.3" fill="#111"/>
<rect x="610.9" y="380.9" width="110.2" height="110.2" fill="none" stroke="#222" stroke-width="1.1"/>
<rect x="620.2" y="446.9" width="17.9" height="44.4" fill="#808080"/><rect x="638.1" y="435.9" width="18" height="55.4" fill="#f00"/><rect x="656.1" y="430.3" width="18.9" height="61" fill="#0f0"/><rect x="675" y="391.7" width="18.3" height="99.6" fill="#00f"/><rect x="693.3" y="458" width="18.8" height="33.3" fill="#000"/>
  </svg>
</div>
</body></html>
